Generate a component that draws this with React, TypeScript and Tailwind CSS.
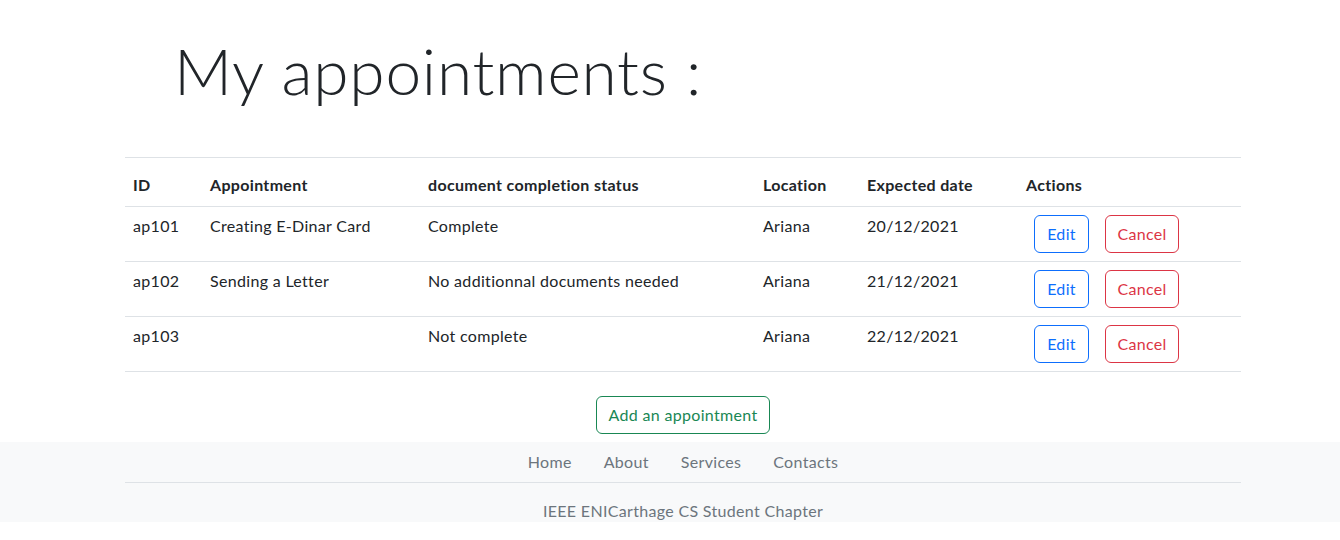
import React from "react";

type Appointment = {
  id: string;
  name: string;
  status: string;
  location: string;
  date: string;
};

const appointments: Appointment[] = [
  { id: "ap101", name: "Creating E-Dinar Card", status: "Complete", location: "Ariana", date: "20/12/2021" },
  { id: "ap102", name: "Sending a Letter", status: "No additionnal documents needed", location: "Ariana", date: "21/12/2021" },
  { id: "ap103", name: "", status: "Not complete", location: "Ariana", date: "22/12/2021" },
];

const columns = [
  { label: "ID", width: "w-[77px]" },
  { label: "Appointment", width: "w-[218px]" },
  { label: "document completion status", width: "w-[335px]" },
  { label: "Location", width: "w-[104px]" },
  { label: "Expected date", width: "w-[159px]" },
  { label: "Actions", width: "w-[223px]" },
];

export default function App() {
  return (
    <div className="min-h-[540px] bg-white font-['Lato','Liberation_Sans',sans-serif] text-base tracking-[0.02em] text-[#212529]">
      <h1 className="pl-[174px] pt-[33px] text-[64px] font-light leading-[1.2] tracking-[0.012em]">My appointments :</h1>

      <div className="ml-[125px] mt-[47px] w-[1116px]">
        <table className="w-full table-fixed border-collapse border-t border-[#dee2e6] text-left">
          <thead>
            <tr className="h-[49px] border-b border-[#dee2e6]">
              {columns.map((c) => (
                <th key={c.label} className={`${c.width} px-2 pb-[9px] align-bottom font-bold leading-6`}>
                  {c.label}
                </th>
              ))}
            </tr>
          </thead>
          <tbody>
            {appointments.map((a) => (
              <tr key={a.id} className="h-[55px] border-b border-[#dee2e6]">
                <td className="px-2 pt-[7px] align-top leading-6">{a.id}</td>
                <td className="px-2 pt-[7px] align-top leading-6">{a.name}</td>
                <td className="px-2 pt-[7px] align-top leading-6">{a.status}</td>
                <td className="px-2 pt-[7px] align-top leading-6">{a.location}</td>
                <td className="px-2 pt-[7px] align-top leading-6">{a.date}</td>
                <td className="px-2 pt-2 pb-2 align-top leading-6">
                  <div className="flex gap-4 pl-2">
                    <button className="h-[38px] w-[55px] rounded-[6px] border border-[#0d6efd] text-[#0d6efd]">Edit</button>
                    <button className="h-[38px] w-[74px] rounded-[6px] border border-[#dc3545] text-[#dc3545]">Cancel</button>
                  </div>
                </td>
              </tr>
            ))}
          </tbody>
        </table>

        <div className="mt-6 flex justify-center">
          <button className="h-[38px] w-[174px] rounded-[6px] border border-[#198754] text-[#198754]">Add an appointment</button>
        </div>
      </div>

      <footer className="mt-2 h-[80px] overflow-hidden bg-[#f8f9fa]">
        <div className="ml-[125px] w-[1116px]">
          <ul className="flex justify-center border-b border-[#dee2e6] pt-2 pb-2">
            {["Home", "About", "Services", "Contacts"].map((l) => (
              <li key={l}>
                <a href="#" className="px-4 leading-6 text-[#6c757d]">{l}</a>
              </li>
            ))}
          </ul>
          <p className="mt-4 text-center leading-6 text-[#6c757d]">IEEE ENICarthage CS Student Chapter</p>
        </div>
      </footer>
    </div>
  );
}
